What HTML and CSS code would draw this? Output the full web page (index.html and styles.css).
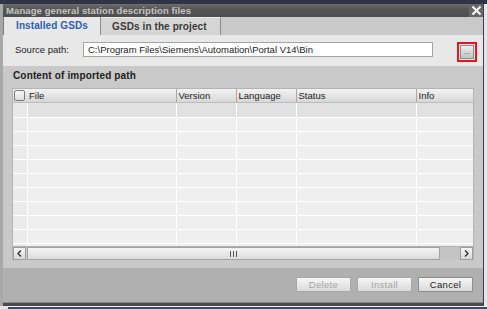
FILE: index.html
```html
<!DOCTYPE html>
<html>
<head>
<meta charset="utf-8">
<title>Manage general station description files</title>
<link rel="stylesheet" href="styles.css">
</head>
<body>
<div class="topline"></div>
<div class="dialog">
	<div class="titlebar">
		<span class="title">Manage general station description files</span>
		<span class="close"><svg width="11" height="11" viewBox="0 0 11 11"><path d="M1.5 1.5L9.5 9.5M9.5 1.5L1.5 9.5" stroke="#fff" stroke-width="2"/></svg></span>
	</div>
	<div class="tabs">
		<div class="tab active">Installed GSDs</div>
		<div class="tab">GSDs in the project</div>
	</div>
	<div class="source">
		<span class="label">Source path:</span>
		<div class="path">C:\Program Files\Siemens\Automation\Portal V14\Bin</div>
		<div class="browse"><span>...</span></div>
	</div>
	<div class="content">
		<div class="heading">Content of imported path</div>
		<div class="list">
			<table class="grid">
				<colgroup><col class="c0"><col class="c1"><col class="c2"><col class="c3"><col class="c4"><col class="c5"></colgroup>
				<thead>
					<tr><th><span class="check"></span></th><th>File</th><th>Version</th><th>Language</th><th>Status</th><th>Info</th></tr>
				</thead>
				<tbody>
					<tr class="first"><td></td><td></td><td></td><td></td><td></td><td></td></tr>
					<tr><td></td><td></td><td></td><td></td><td></td><td></td></tr>
					<tr><td></td><td></td><td></td><td></td><td></td><td></td></tr>
					<tr><td></td><td></td><td></td><td></td><td></td><td></td></tr>
					<tr><td></td><td></td><td></td><td></td><td></td><td></td></tr>
					<tr><td></td><td></td><td></td><td></td><td></td><td></td></tr>
					<tr><td></td><td></td><td></td><td></td><td></td><td></td></tr>
					<tr><td></td><td></td><td></td><td></td><td></td><td></td></tr>
					<tr><td></td><td></td><td></td><td></td><td></td><td></td></tr>
					<tr><td></td><td></td><td></td><td></td><td></td><td></td></tr>
					<tr class="last"><td></td><td></td><td></td><td></td><td></td><td></td></tr>
				</tbody>
			</table>
			<div class="hscroll">
				<div class="arrow"><svg width="5" height="7" viewBox="0 0 5 7"><path d="M4 0.5L1 3.5L4 6.5" fill="none" stroke="#333" stroke-width="1.4"/></svg></div>
				<div class="thumb"><span class="grip"></span></div>
				<div class="track"></div>
				<div class="arrow"><svg width="5" height="7" viewBox="0 0 5 7"><path d="M1 0.5L4 3.5L1 6.5" fill="none" stroke="#333" stroke-width="1.4"/></svg></div>
			</div>
		</div>
	</div>
	<div class="footer">
		<button class="btn" disabled>Delete</button>
		<button class="btn" disabled>Install</button>
		<button class="btn">Cancel</button>
	</div>
	<div class="band"></div>
</div>
<div class="baseline"></div>
</body>
</html>
```

FILE: styles.css
```css
body { margin: 0; width: 487px; height: 309px; overflow: hidden; background: #e6e6e6; font-family: "Liberation Sans", Arial, sans-serif; font-size: 9.5px; color: #222; }
.topline { height: 4px; background: #2f3547; }
.dialog { width: 480px; height: 302px; border-left: 3px solid #a8a8a8; border-right: 1px solid #3c3d46; display: flex; flex-direction: column; background: #c9c9c9; }

/* title */
.titlebar { height: 13px; display: flex; justify-content: space-between; background: linear-gradient(#6e6e6e, #575757 35%, #4f4f4f); }
.title { padding-left: 3px; line-height: 13px; font-size: 9.5px; font-weight: bold; color: #c4c4c4; letter-spacing: 0.1px; }
.close { width: 14px; display: flex; align-items: center; justify-content: center; background: #686868; }

/* tabs */
.tabs { height: 18px; display: flex; background: #c9c9c9; border-left: 1px solid #7c7c7c; }
.tab { height: 18px; line-height: 18px; font-size: 10px; font-weight: bold; color: #3a3a3a; background: #d5d5d5; border-right: 1px solid #8c8c8c; border-top: 1px solid #ececec; box-sizing: border-box; padding: 0 0 0 11px; width: 120px; letter-spacing: 0.1px; }
.tab.active { width: 97px; color: #2f5fb3; background: #e8e8e8; border-top: 0; padding-left: 12px; }

/* source path */
.source { height: 31px; box-sizing: border-box; padding: 7px 0 0 12px; display: flex; align-items: flex-start; background: #e8e8e8; }
.label { width: 68px; line-height: 15px; }
.path { width: 350px; height: 15px; box-sizing: border-box; border: 1px solid #a4a4a4; background: #fff; padding-left: 4px; line-height: 13px; white-space: nowrap; overflow: hidden; }
.browse { margin-left: 24px; width: 20px; height: 20px; box-sizing: border-box; border: 2px solid #e8151c; padding: 1px; }
.browse span { display: block; height: 14px; box-sizing: border-box; border: 1px solid #8e8e8e; background: linear-gradient(#ececec, #c2c2c2); font-size: 8px; line-height: 12px; text-align: center; color: #555; overflow: hidden; }

/* content */
.content { height: 202px; box-sizing: border-box; padding: 0 9px; }
.heading { height: 22px; line-height: 19px; font-size: 10px; font-weight: bold; padding-left: 1px; color: #1e1e1e; letter-spacing: 0.15px; }
.list { width: 462px; box-sizing: border-box; border: 1px solid #b4b4b4; border-bottom: 0; }
.grid { width: 460px; table-layout: fixed; border-collapse: collapse; }
.c0 { width: 14px; }
.c1 { width: 149px; }
.c2 { width: 60px; }
.c3 { width: 60px; }
.c4 { width: 120px; }
.c5 { width: 57px; }
.grid th { height: 13px; padding: 0 0 0 2px; text-align: left; font-weight: normal; color: #222; background: linear-gradient(#f2f2f2, #d7d7d7); border-right: 1px solid #a9a9a9; border-bottom: 1px solid #bdbdbd; }
.grid th:first-child { padding: 0 0 0 1px; border-right: 0; }
.grid th:last-child { border-right: 0; }
.check { display: block; width: 11px; height: 11px; box-sizing: border-box; border: 1px solid #7b7b7b; border-radius: 2px; background: linear-gradient(#f8f8f8, #dedede); }
.grid td { height: 13px; padding: 0; background: #efefef; border-right: 1px solid #fff; border-bottom: 1px solid #fff; }
.grid td:first-child { background: #ebebeb; }
.grid td:last-child { border-right: 0; }
.grid tr.first td { height: 14px; background: #e1e1e1; }
.grid tr.first td:first-child { background: #e9e9e9; }
.grid tr.last td { height: 2px; border-bottom: 0; }

.hscroll { height: 13px; display: flex; border-top: 1px solid #b0b0b0; }
.arrow { width: 13px; height: 13px; box-sizing: border-box; border: 1px solid #9c9c9c; background: linear-gradient(#f6f6f6, #dadada); display: flex; align-items: center; justify-content: center; }
.thumb { margin-left: 1px; width: 413px; height: 13px; box-sizing: border-box; border: 1px solid #a2a2a2; background: linear-gradient(#f4f4f4, #dcdcdc); display: flex; align-items: center; justify-content: center; }
.grip { width: 5px; height: 6px; border-left: 1px solid #555; border-right: 1px solid #555; background: linear-gradient(to right, transparent 2px, #555 2px, #555 3px, transparent 3px); }
.track { flex: 1; background: #c4c4c4; }

/* footer */
.footer { height: 34px; box-sizing: border-box; padding: 9px 10px 0 0; display: flex; justify-content: flex-end; align-items: flex-start; gap: 6px; background: #b0b0b0; }
.btn { width: 55px; height: 15px; padding: 0; font-family: "Liberation Sans", Arial, sans-serif; font-size: 9.5px; letter-spacing: 0.3px; color: #1e1e1e; border: 1px solid #8e8e8e; border-radius: 1px; background: linear-gradient(#f6f6f6, #dadada); }
.btn:disabled { color: #a6a6a6; border-color: #a6a6a6; }
.band { height: 4px; background: #4a4a4a; border-top: 1px solid #8a8a8a; box-sizing: border-box; }
.baseline { margin-left: 8px; height: 2px; border-top: 1px solid #f6f6f6; background: #3b4668; }
```
